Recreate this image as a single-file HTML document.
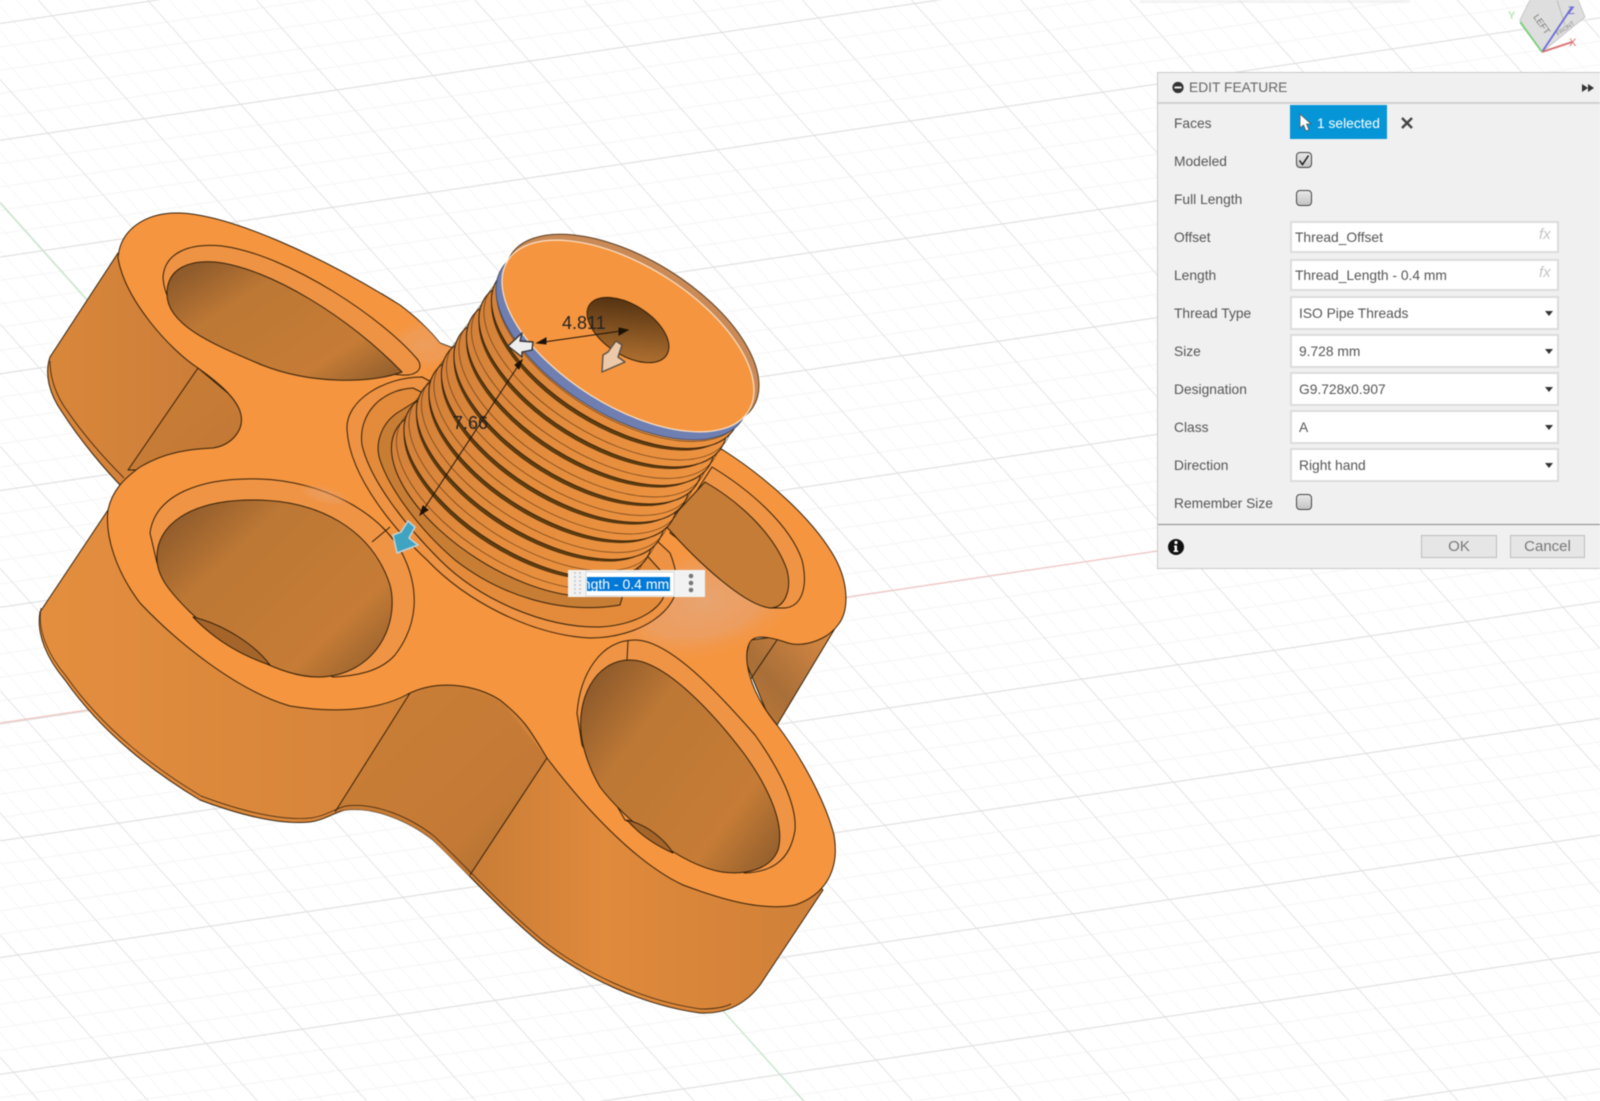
<!DOCTYPE html>
<html><head><meta charset="utf-8"><title>Edit Feature</title>
<style>
html,body{margin:0;padding:0;width:1600px;height:1101px;overflow:hidden;background:#fff;font-family:"Liberation Sans",sans-serif}
#w{position:absolute;left:0;top:0;width:1600px;height:1101px;filter:blur(.4px)}
svg.s{position:absolute;left:0;top:0}
.p{position:absolute;left:1157px;top:72px;width:443px;height:497px;background:#f0f0f0;border:1px solid #c9c9c9;border-right:0;box-sizing:border-box}
.a{position:absolute;white-space:nowrap}
.l{position:absolute;left:1174px;font-size:13.8px;line-height:17px;color:#555}
.i{position:absolute;left:1290px;width:269px;height:32px;background:#fff;border:2px solid #dcdcdc;box-sizing:border-box;font-size:13.8px;line-height:29px;color:#555;padding-left:3px}
.d{position:absolute;left:1290px;width:269px;height:34px;background:#fff;border:2px solid #dcdcdc;box-sizing:border-box;font-size:13.8px;line-height:31px;color:#555;padding-left:7px}
.d:after{content:"";position:absolute;right:4px;top:13px;border-left:4.5px solid transparent;border-right:4.5px solid transparent;border-top:5px solid #333}
.c{position:absolute;left:1296px;width:16px;height:16px;border:1px solid #444;border-radius:4px;box-sizing:border-box;background:linear-gradient(#e8e8e8,#c4c4c4)}
.f{position:absolute;left:1539px;font:italic 15px "Liberation Sans",sans-serif;color:#c4c4c4;line-height:16px}
.b{position:absolute;top:535px;height:23px;background:#e6e6e6;border:1px solid #bcbcbc;box-sizing:border-box;font-size:15px;line-height:21px;text-align:center;color:#777}
</style></head><body><div id="w">
<svg class="s" width="1600" height="1101" viewBox="0 0 1600 1101" xmlns="http://www.w3.org/2000/svg">
<defs>
<pattern id="grid" width="100" height="100" patternUnits="userSpaceOnUse" patternTransform="matrix(.963 -.144 .92 1.03 143.3 118.3)">
<rect width="100" height="100" fill="#fff"/>
<g fill="#f6f6f6"><rect x="20" width="1" height="100"/><rect x="40" width="1" height="100"/><rect x="60" width="1" height="100"/><rect x="80" width="1" height="100"/><rect y="20" width="100" height="1"/><rect y="40" width="100" height="1"/><rect y="60" width="100" height="1"/><rect y="80" width="100" height="1"/></g>
<g fill="#e0e0e0"><rect width="1" height="100"/><rect width="100" height="1"/></g>
</pattern>
<path id="tf" d="M118 258C120 230 145 212 180 213C230 215 320 255 400 305C420 320 432 333 440 343L723 450C770 480 815 522 835 558C848 582 850 610 838 625C825 642 800 648 785 642C770 637 755 634 750 642C742 655 748 690 777 725C800 755 825 800 834 835C840 870 825 895 795 905C760 912 715 897 683 885C640 865 590 815 547 758C530 730 525 720 500 700C478 686 440 678 408 694C385 707 345 715 290 706C235 690 175 640 140 603C115 570 105 535 108 510C112 490 125 478 140 467C165 452 190 449 213 448C232 445 244 430 241 415C238 398 215 380 198 368C170 350 125 300 118 258Z"/>
<clipPath id="tfc"><use href="#tf"/></clipPath>
<linearGradient id="wallA" x1="0" y1="0" x2="1" y2="0"><stop offset="0" stop-color="#e48e3f"/><stop offset=".45" stop-color="#d5843a"/><stop offset=".55" stop-color="#c97d37"/><stop offset=".72" stop-color="#e08a3c"/><stop offset="1" stop-color="#cf8038"/></linearGradient>
<linearGradient id="wallB" x1="0" y1="0" x2="1" y2="0"><stop offset="0" stop-color="#d9873a"/><stop offset=".6" stop-color="#d0803a"/><stop offset="1" stop-color="#c67b36"/></linearGradient>
<linearGradient id="wallC" x1="0" y1="1" x2="1" y2="0"><stop offset="0" stop-color="#c07a38"/><stop offset=".35" stop-color="#a86f38"/><stop offset=".7" stop-color="#c88040"/><stop offset="1" stop-color="#e09040"/></linearGradient>
<linearGradient id="rec" x1="0" y1="0" x2="1" y2="1"><stop offset="0" stop-color="#cb7f37"/><stop offset=".7" stop-color="#c47a36"/><stop offset="1" stop-color="#a5692f"/></linearGradient>
<linearGradient id="hole" x1="0" y1=".2" x2="1" y2="1"><stop offset="0" stop-color="#915c2c"/><stop offset=".25" stop-color="#bd7835"/><stop offset=".72" stop-color="#c67c36"/><stop offset="1" stop-color="#8a5a2c"/></linearGradient>
<linearGradient id="thr" x1="0" y1="0" x2="1" y2="0"><stop offset="0" stop-color="#d3813a"/><stop offset=".5" stop-color="#e58d3d"/><stop offset="1" stop-color="#ec9240"/></linearGradient>
<linearGradient id="dh" x1="0" y1="0" x2="1" y2="1"><stop offset=".1" stop-color="#4f2f10"/><stop offset=".6" stop-color="#8f5a25"/><stop offset="1" stop-color="#c07c38"/></linearGradient>
<radialGradient id="hl"><stop offset="0" stop-color="#e9a470"/><stop offset=".55" stop-color="#eaa06a" stop-opacity=".75"/><stop offset="1" stop-color="#f59540" stop-opacity="0"/></radialGradient>
<g id="th">
<ellipse rx="140" ry="68" transform="rotate(32)" fill="url(#thr)" stroke="#33200a"/>
<ellipse cx="5" cy="-7" rx="140" ry="68" transform="rotate(32 5 -7)" fill="none" stroke="#33200a" stroke-width=".7" opacity=".7"/>
<ellipse cx="10" cy="-15" rx="137" ry="67" transform="rotate(32 10 -15)" fill="#63400f" stroke="#33200a" stroke-width=".6"/>
</g>
</defs>
<rect width="1600" height="1101" fill="url(#grid)"/>
<rect x="1140" y="0" width="270" height="3" fill="#e4e4e4" opacity=".4"/>
<line x1="0" y1="203" x2="804" y2="1101" stroke="#c5e8ca" stroke-width="1.2"/>
<line x1="0" y1="723" x2="1157" y2="551" stroke="#f1c4c4" stroke-width="1.2"/>

<!-- nav cube -->
<polygon points="1520,20 1530,0 1578,0 1585,17 1542,52" fill="#dedede" stroke="#c8c8c8"/>
<line x1="1557" y1="0" x2="1565" y2="25" stroke="#bbb"/>
<text x="0" y="0" transform="translate(1533 17) rotate(55)" font-family="Liberation Sans" font-size="9" fill="#777">LEFT</text>
<text x="0" y="0" transform="translate(1558 36) rotate(-35)" font-family="Liberation Sans" font-size="6" fill="#888">FRONT</text>
<line x1="1542" y1="52" x2="1572" y2="7" stroke="#6c6cd6" stroke-width="1.8"/>
<line x1="1542" y1="52" x2="1572" y2="42" stroke="#d96f6f" stroke-width="1.8"/>
<line x1="1542" y1="52" x2="1520" y2="22" stroke="#7ad07a" stroke-width="1.8"/>
<text x="1508" y="19" font-family="Liberation Sans" font-size="11" fill="#9adf9a">Y</text>
<text x="1568" y="14" font-family="Liberation Sans" font-size="11" fill="#6c6cd6">Z</text>
<text x="1569" y="46" font-family="Liberation Sans" font-size="11" fill="#d96f6f">X</text>

<g stroke="#33200a" stroke-width="1" stroke-linejoin="round">
<!-- walls -->
<path d="M118 253L50 357C44 375 50 395 62 412C80 440 105 470 125 490L241 420L200 360Z" fill="url(#wallB)"/>
<path d="M198 368L128 470L200 470L260 420Z" fill="url(#rec)"/>
<path d="M50 361C50 378 56 396 68 412C86 438 108 462 124 478" fill="none" stroke-width=".8"/>
<path d="M108 510L40 612C36 635 48 660 65 680C100 730 150 770 200 800C240 815 280 825 310 822C325 820 335 812 345 810C375 806 410 822 433 840C460 865 500 910 540 943C580 975 640 1005 700 1013C725 1014 745 1005 760 985L823 890L600 700Z" fill="url(#wallA)"/>
<path d="M410 693L443 683L500 700L547 758L469 876L433 840C410 822 375 806 345 810L335 812Z" fill="url(#rec)" stroke="none"/>
<line x1="410" y1="693" x2="335" y2="812"/>
<line x1="547" y1="758" x2="470" y2="875"/>
<path d="M40 612C36 635 48 660 65 680C100 730 150 770 200 800C240 815 280 825 310 822C325 820 335 812 345 810C375 806 410 822 433 840C460 865 500 910 540 943C580 975 640 1005 700 1013C712 1013 722 1012 730 1008" fill="none" stroke-width=".7" transform="translate(1 -4)"/>
<path d="M840 620L777 725L767 713L745 660L750 640L830 630Z" fill="url(#wallC)"/>
<line x1="777" y1="640" x2="750" y2="680"/>
<!-- top face -->
<use href="#tf" fill="#f5953f"/>
<g clip-path="url(#tfc)" stroke="none">
<ellipse cx="705" cy="602" rx="110" ry="60" fill="url(#hl)" transform="rotate(-15 705 602)"/>
<ellipse cx="425" cy="345" rx="40" ry="28" fill="url(#hl)" opacity=".6"/>
</g>
<!-- BL hole -->
<path d="M163 277C165 252 190 243 222 246C290 255 385 320 418 360C424 370 415 376 402 375L262 365C215 345 165 320 163 277Z" fill="#ee9344"/>
<path d="M167 292C168 268 190 260 215 262C270 268 350 318 402 372C370 384 310 384 262 365C215 345 165 325 167 292Z" fill="url(#hole)"/>
<!-- FL hole -->
<path d="M150 533C155 495 200 477 260 479C320 481 380 510 403 555C420 590 418 625 395 655C380 672 355 676 333 677L190 612L157 563Z" fill="#ef9445"/>
<ellipse cx="325" cy="495" rx="30" ry="10" fill="url(#hl)" stroke="none" opacity=".55" transform="rotate(15 325 495)"/>
<path d="M157 560C155 525 190 500 253 500C320 500 372 530 390 585C400 625 375 675 320 677C280 678 225 645 190 612C170 592 158 578 157 560Z" fill="url(#hole)"/>
<path d="M193 617C225 625 255 645 270 665C240 655 215 640 193 617Z" fill="#a5652a"/>
<line x1="372" y1="542" x2="390" y2="527"/>
<!-- FR hole -->
<path d="M577 713C580 675 600 640 635 640C670 640 720 695 755 735C780 770 797 805 795 830C790 862 770 872 745 873L625 820L582 745Z" fill="#ef9445"/>
<path d="M582 740C575 700 595 660 630 660C665 660 715 715 745 755C770 790 785 825 778 850C770 870 745 875 722 872C680 865 625 820 600 787C590 770 585 755 582 740Z" fill="url(#hole)"/>
<path d="M627 820C648 825 665 840 673 853C655 845 640 835 627 820Z" fill="#a5652a"/>
<line x1="628" y1="641" x2="627" y2="660"/>
<!-- BR hole -->
<path d="M670 533L712 467C750 490 790 525 802 560C808 585 803 606 785 608L770 608Z" fill="#ef9445"/>
<path d="M665 525L705 482C740 502 775 535 787 570C792 590 785 608 770 608C745 605 700 565 665 525Z" fill="#c57c37"/>
<!-- rings at thread base -->
<path d="M422 377C385 377 345 400 347 430C350 480 400 535 427 560C465 600 530 635 590 638C640 638 680 610 677 580C675 565 672 558 670 553L560 450Z" fill="#ee9243"/>
<path d="M413 388C380 390 358 415 362 445C370 480 405 525 440 560C480 600 545 628 600 627C640 625 668 605 665 587C664 578 660 570 660 570L560 460Z" fill="#e38b3b"/>
<path d="M397 413C380 425 375 445 380 460C390 490 420 530 455 560C500 595 560 615 620 605L650 500L450 380Z" fill="#c87d35"/>
</g>
<!-- thread -->
<use href="#th" x="515.5" y="502.5"/>
<use href="#th" x="528" y="484"/>
<use href="#th" x="540.5" y="465.5"/>
<use href="#th" x="553" y="447"/>
<use href="#th" x="565.5" y="428.5"/>
<use href="#th" x="578" y="410"/>
<use href="#th" x="590.5" y="391.5"/>
<use href="#th" x="603" y="373"/>
<use href="#th" x="615.5" y="354.5"/>
<!-- top disk -->
<ellipse cx="632" cy="331" rx="143" ry="71" transform="rotate(32 632 331)" fill="#c98a58" stroke="#5a3a1c"/>
<ellipse cx="622" cy="344" rx="142" ry="70" transform="rotate(32 622 344)" fill="#6f7fb2" stroke="#45506f"/>
<ellipse cx="628" cy="336" rx="142" ry="70" transform="rotate(32 628 336)" fill="#f5953f" stroke="#fbe3cb" stroke-width="1.2"/>
<ellipse cx="628" cy="330" rx="46" ry="25" transform="rotate(33 628 330)" fill="url(#dh)" stroke="#33200a"/>
<!-- dimensions -->
<g stroke="#1c1208" stroke-width="1" fill="#1c1208">
<line x1="537" y1="343" x2="628" y2="330"/>
<polygon points="537,343 546,338 546,344"/>
<polygon points="628,330 619,328 619,335"/>
<line x1="522" y1="360" x2="420" y2="515"/>
<polygon points="522,360 515,365 519,369"/>
<polygon points="420,515 423,506 428,510"/>
</g>
<text x="562" y="329" font-family="Liberation Sans" font-size="18" fill="#222">4.811</text>
<text x="453" y="429" font-family="Liberation Sans" font-size="18" fill="#222">7.66</text>
<!-- manipulators -->
<polygon points="508,346 522,333 520,341 533,342 532,350 522,352 522,357" fill="#eee" stroke="#333" stroke-width="1.4" stroke-linejoin="round"/>
<path d="M622 345L616 341L608 352L603 355L602 372L625 362L618 357Z" fill="#ecc9a8" stroke="#5a5048" stroke-width="1.4" stroke-linejoin="round"/>
<path d="M415 527L408 521L401 532L393 535L397 553L418 545L409 538Z" fill="#3fa3c2" stroke="#c5d2d4" stroke-width="1.6" stroke-linejoin="round"/>
<!-- inline input -->
<rect x="568" y="570" width="137" height="27" fill="#f2f2f2"/>
<line x1="575" y1="572" x2="575" y2="595" stroke="#ccc" stroke-width="2" stroke-dasharray="2 2"/>
<line x1="580" y1="572" x2="580" y2="595" stroke="#ccc" stroke-width="2" stroke-dasharray="2 2"/>
<rect x="586" y="572" width="88" height="24" fill="#fff" stroke="#d8d8d8"/>
<rect x="587" y="577" width="83" height="14" fill="#0078d7"/>
<svg x="587" y="570" width="83" height="27" viewBox="0 0 83 27"><text x="-12" y="19" font-family="Liberation Sans" font-size="14" fill="#fff">ength - 0.4 mm</text></svg>
<g fill="#777"><circle cx="691" cy="576" r="2.3"/><circle cx="691" cy="583" r="2.3"/><circle cx="691" cy="590" r="2.3"/></g>
</svg>

<div class="p"></div>
<div class="a" style="left:1158px;top:102px;width:442px;height:2px;background:#d0d0d0"></div>
<div class="a" style="left:1158px;top:524px;width:442px;height:1px;background:#888"></div>
<svg class="s" width="1600" height="600" viewBox="0 0 1600 600" style="pointer-events:none">
<circle cx="1178" cy="87.5" r="5.6" fill="#333"/><rect x="1174.5" y="86.5" width="7" height="2" fill="#eee"/>
<polygon points="1582,84 1588,88 1582,92" fill="#333"/><polygon points="1588,84 1594,88 1588,92" fill="#333"/>
<circle cx="1176" cy="547" r="8" fill="#111"/><circle cx="1176" cy="542.5" r="1.6" fill="#fff"/><path d="M1174 545.5h3v5h1.2v1.5h-4.6v-1.5h1v-3.6h-.6z" fill="#fff"/>
</svg>
<div class="a" style="left:1189px;top:79px;font-size:13.8px;line-height:17px;color:#666">EDIT FEATURE</div>

<div class="l" style="top:115px">Faces</div>
<div class="a" style="left:1290px;top:105px;width:97px;height:34px;background:#0696d7"></div>
<svg class="s" style="left:1298px;top:113px" width="14" height="20" viewBox="0 0 14 20"><path d="M2 1L2 15L5.5 12L8 18L11 16.8L8.5 11L13 11Z" fill="#fff" stroke="#555" stroke-width=".8"/></svg>
<div class="a" style="left:1317px;top:115px;font-size:13.8px;line-height:17px;color:#fff">1 selected</div>
<svg class="s" style="left:1401px;top:117px" width="12" height="12" viewBox="0 0 12 12"><path d="M1 1L11 11M11 1L1 11" stroke="#444" stroke-width="2.4"/></svg>

<div class="l" style="top:153px">Modeled</div>
<div class="c" style="top:152px"></div>
<svg class="s" style="left:1296px;top:152px" width="16" height="16" viewBox="0 0 16 16"><path d="M3.5 8.5L6.5 12.5L12.5 3.5" fill="none" stroke="#111" stroke-width="1.4"/></svg>
<div class="l" style="top:191px">Full Length</div>
<div class="c" style="top:190px"></div>
<div class="l" style="top:229px">Offset</div>
<div class="i" style="top:221px">Thread_Offset</div><div class="f" style="top:227px">fx</div>
<div class="l" style="top:267px">Length</div>
<div class="i" style="top:259px">Thread_Length - 0.4 mm</div><div class="f" style="top:265px">fx</div>
<div class="l" style="top:305px">Thread Type</div>
<div class="d" style="top:296px">ISO Pipe Threads</div>
<div class="l" style="top:343px">Size</div>
<div class="d" style="top:334px">9.728 mm</div>
<div class="l" style="top:381px">Designation</div>
<div class="d" style="top:372px">G9.728x0.907</div>
<div class="l" style="top:419px">Class</div>
<div class="d" style="top:410px">A</div>
<div class="l" style="top:457px">Direction</div>
<div class="d" style="top:448px">Right hand</div>
<div class="l" style="top:495px">Remember Size</div>
<div class="c" style="top:494px"></div>
<div class="b" style="left:1421px;width:76px">OK</div>
<div class="b" style="left:1510px;width:75px">Cancel</div>
</div></body></html>
